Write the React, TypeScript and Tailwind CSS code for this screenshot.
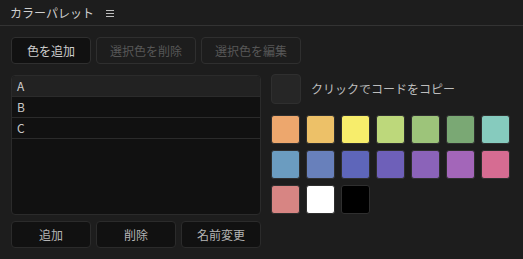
const palette: string[] = [
  "#eda76d",
  "#edc168",
  "#f7ed6b",
  "#bdd87b",
  "#9dc47a",
  "#7aa874",
  "#86cbbe",
  "#6b9cc0",
  "#6880bb",
  "#5e66ba",
  "#6e60b9",
  "#8b63b9",
  "#a366b9",
  "#d66c92",
  "#d78583",
  "#ffffff",
  "#000000",
];

const items = ["A", "B", "C"];

const App = () => {
  return (
    <div
      className="w-[523px] h-[259px] bg-[#1d1d1d] text-[#c4c4c4] overflow-hidden"
      style={{ fontFamily: '"Noto Sans CJK JP", "Noto Sans", sans-serif' }}>
      {/* header */}
      <div className="h-[26px] flex items-center gap-[12px] px-[10px] border-b border-[#333]">
        <span className="text-[12px] leading-none text-[#cfcfcf]">カラーパレット</span>
        <svg width="8" height="9" viewBox="0 0 8 9" className="mt-[1px]">
          <path d="M0 1.5h8M0 4.5h8M0 7.5h8" stroke="#bdbdbd" strokeWidth="1" />
        </svg>
      </div>

      {/* toolbar */}
      <div className="flex gap-[5px] pl-[11px] pt-[11px]">
        <button className="w-[80px] h-[27px] rounded-[4px] bg-[#111] border border-[#2f2f2f] text-[12px] text-[#cdcdcd]">
          色を追加
        </button>
        <button className="w-[100px] h-[27px] rounded-[4px] border border-[#2f2f2f] text-[12px] text-[#575757]">
          選択色を削除
        </button>
        <button className="w-[100px] h-[27px] rounded-[4px] border border-[#2f2f2f] text-[12px] text-[#575757]">
          選択色を編集
        </button>
      </div>

      <div className="flex gap-[10px] pl-[11px] pt-[11px]">
        {/* left column */}
        <div className="w-[250px] flex flex-col gap-[6px]">
          <div className="h-[140px] rounded-[4px] bg-[#111] border border-[#2b2b2b] overflow-hidden">
            {items.map((item, i) => (
              <div
                key={item}
                className={`h-[21px] flex items-center pl-[5px] text-[12px] border-b border-[#2b2b2b] ${
                  i === 0 ? "bg-[#222] text-[#d0d0d0]" : "text-[#c8c8c8]"
                }`}>
                {item}
              </div>
            ))}
          </div>
          <div className="flex gap-[5px]">
            <button className="w-[80px] h-[27px] rounded-[4px] bg-[#111] border border-[#2b2b2b] text-[12px] text-[#b5b5b5]">
              追加
            </button>
            <button className="w-[80px] h-[27px] rounded-[4px] bg-[#111] border border-[#2b2b2b] text-[12px] text-[#b5b5b5]">
              削除
            </button>
            <button className="w-[80px] h-[27px] rounded-[4px] bg-[#111] border border-[#2b2b2b] text-[12px] text-[#b5b5b5]">
              名前変更
            </button>
          </div>
        </div>

        {/* right column */}
        <div className="flex flex-col">
          <div className="flex items-center gap-[10px] -mt-[1px]">
            <div className="w-[30px] h-[30px] rounded-[4px] bg-[#262626] border border-[#2f2f2f]" />
            <span className="text-[12px] text-[#bdbdbd]">クリックでコードをコピー</span>
          </div>
          <div className="grid grid-cols-[repeat(7,29px)] gap-[6px] mt-[11px]">
            {palette.map((c) => (
              <div
                key={c}
                className="w-[29px] h-[29px] rounded-[3px] border border-[#2f2f2f]"
                style={{ backgroundColor: c }}
              />
            ))}
          </div>
        </div>
      </div>
    </div>
  );
};

export default App;
